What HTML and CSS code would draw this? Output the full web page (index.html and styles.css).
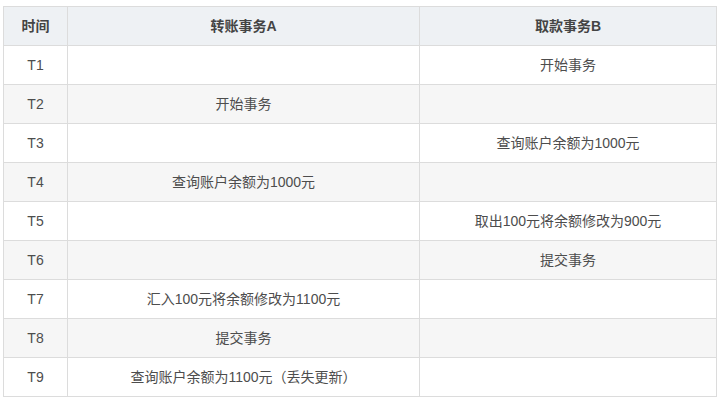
FILE: index.html
```html
<!DOCTYPE html>
<html lang="zh">
<head>
<meta charset="utf-8">
<link rel="stylesheet" href="styles.css">
</head>
<body>
<table class="tx">
  <colgroup>
    <col class="c-time"><col class="c-a"><col class="c-b">
  </colgroup>
  <thead>
    <tr><th>时间</th><th>转账事务A</th><th>取款事务B</th></tr>
  </thead>
  <tbody>
    <tr><td>T1</td><td></td><td>开始事务</td></tr>
    <tr><td>T2</td><td>开始事务</td><td></td></tr>
    <tr><td>T3</td><td></td><td>查询账户余额为1000元</td></tr>
    <tr><td>T4</td><td>查询账户余额为1000元</td><td></td></tr>
    <tr><td>T5</td><td></td><td>取出100元将余额修改为900元</td></tr>
    <tr><td>T6</td><td></td><td>提交事务</td></tr>
    <tr><td>T7</td><td>汇入100元将余额修改为1100元</td><td></td></tr>
    <tr><td>T8</td><td>提交事务</td><td></td></tr>
    <tr><td>T9</td><td>查询账户余额为1100元（丢失更新）</td><td></td></tr>
  </tbody>
</table>
</body>
</html>
```
FILE: styles.css
```css
html, body {
  margin: 0;
  padding: 0;
  background: #fff;
}
body {
  padding: 6px 0 0 3px;
  font-family: "Liberation Sans", "Noto Sans CJK SC", sans-serif;
  font-size: 14px;
  color: #4d4d4d;
}
.tx {
  border-collapse: collapse;
  width: 713px;
  table-layout: fixed;
}
.c-time { width: 64px; }
.c-a { width: 352px; }
.c-b { width: 297px; }
.tx th, .tx td {
  border: 1px solid #dcdcdc;
  height: 38px;
  padding: 0 8px;
  text-align: center;
  vertical-align: middle;
  line-height: 20px;
  box-sizing: border-box;
}
.tx th {
  background: #eef1f4;
  font-weight: bold;
  color: #444;
  height: 39px;
}
.tx tbody td { height: 39px; }
.tx tbody tr:nth-child(even) td {
  background: #f6f6f6;
}
```
